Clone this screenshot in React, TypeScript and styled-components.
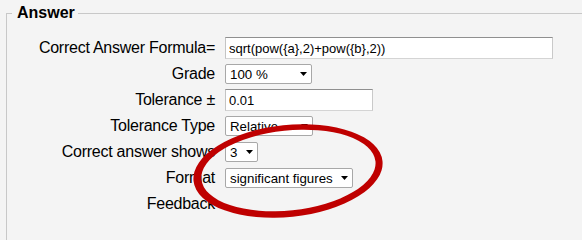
import React from 'react'
import styled, { createGlobalStyle } from 'styled-components'

const GlobalStyle = createGlobalStyle`
  html, body {
    margin: 0;
    padding: 0;
    height: 100%;
    overflow: hidden;
    background: #f4f4f4;
    font-family: 'Liberation Sans', Arial, sans-serif;
  }
`

const Page = styled.div`
  position: relative;
  width: 100%;
  height: 100vh;
  min-height: 223px;
  overflow: hidden;
  padding-top: 4px;
  box-sizing: border-box;
  background: #f4f4f4;
`

const Fieldset = styled.fieldset`
  margin: 0 0 0 6px;
  padding: 0;
  width: 640px;
  min-height: 500px;
  border: 1px solid #c8c8c8;
  box-sizing: border-box;
`

const Legend = styled.legend`
  margin-left: 5px;
  padding: 0 3px 0 5px;
  font-size: 16px;
  line-height: 18px;
  font-weight: 700;
  color: #000;
`

const Form = styled.div`
  display: flex;
  flex-direction: column;
  margin-top: 13px;
`

const Row = styled.div`
  display: flex;
  align-items: center;
  gap: 10px;
  height: 26px;
`

const Label = styled.span`
  width: 208px;
  text-align: right;
  font-size: 16px;
  letter-spacing: -0.25px;
  color: #000;
  white-space: nowrap;
`

const TextInput = styled.input<{ $width: number }>`
  width: ${({ $width }) => $width}px;
  height: 22px;
  box-sizing: border-box;
  margin: 0;
  padding: 0 3px;
  font-family: 'Liberation Sans', Arial, sans-serif;
  font-size: 13px;
  color: #000;
  background: #fff;
  border: 1px solid;
  border-color: #8f8f8f #c9c9c9 #d4d4d4 #c4c4c4;
  outline: none;
`

const Select = styled.div<{ $width: number }>`
  display: flex;
  align-items: center;
  justify-content: space-between;
  width: ${({ $width }) => $width}px;
  height: 20px;
  box-sizing: border-box;
  padding: 0 4px 0 4px;
  font-size: 13.3px;
  color: #000;
  background: #fff;
  border: 1px solid #a8a8a8;
  border-radius: 2px;
  white-space: nowrap;
`

const Arrow = () => (
  <svg width='7' height='4' viewBox='0 0 7 4'>
    <polygon points='0,0 7,0 3.5,4' fill='#000' />
  </svg>
)

const Annotation = styled.svg`
  position: absolute;
  left: 0;
  top: 0;
  pointer-events: none;
`

const ringPath = (cx: number, cy: number, rx: number, ry: number) =>
  `M${cx - rx},${cy} a${rx},${ry} 0 1,0 ${2 * rx},0 a${rx},${ry} 0 1,0 ${-2 * rx},0 Z`

const App: React.FC = () => {
  return (
    <Page>
      <GlobalStyle />
      <Fieldset>
        <Legend>Answer</Legend>
        <Form>
          <Row>
            <Label>Correct Answer Formula=</Label>
            <TextInput $width={328} readOnly value='sqrt(pow({a},2)+pow({b},2))' />
          </Row>
          <Row>
            <Label>Grade</Label>
            <Select $width={87}>
              100 %
              <Arrow />
            </Select>
          </Row>
          <Row>
            <Label>Tolerance ±</Label>
            <TextInput $width={148} readOnly value='0.01' />
          </Row>
          <Row>
            <Label>Tolerance Type</Label>
            <Select $width={88}>
              Relative
              <Arrow />
            </Select>
          </Row>
          <Row>
            <Label>Correct answer shows</Label>
            <Select $width={33}>
              3
              <Arrow />
            </Select>
          </Row>
          <Row>
            <Label>Format</Label>
            <Select $width={128}>
              significant figures
              <Arrow />
            </Select>
          </Row>
          <Row>
            <Label>Feedback</Label>
          </Row>
        </Form>
      </Fieldset>
      <Annotation width='582' height='223' viewBox='0 0 582 223'>
        <g transform='rotate(-6 288 171)'>
          <path
            d={ringPath(288, 171, 95, 46) + ' ' + ringPath(288.5, 170.5, 87.5, 40)}
            fill='#bf0000'
            fillRule='evenodd'
          />
        </g>
      </Annotation>
    </Page>
  )
}

export default App
